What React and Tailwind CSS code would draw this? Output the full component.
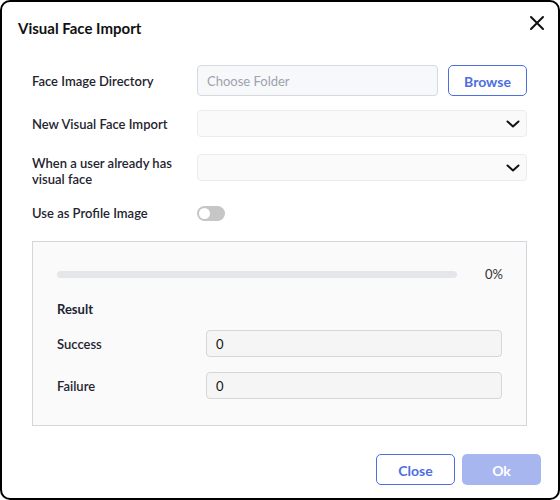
import React, { useState } from "react";

const Chevron = () => (
  <svg width="14" height="8" viewBox="0 0 14 8" fill="none">
    <path d="M1.5 1.5 L7 6.5 L12.5 1.5" stroke="#111" strokeWidth="2" strokeLinecap="round" strokeLinejoin="round" />
  </svg>
);

const SelectBox = ({ className = "" }) => (
  <div className={"flex-1 h-[27px] bg-[#fafafa] border border-[#ececec] rounded-[4px] flex items-center justify-end pr-[6px] " + className}>
    <Chevron />
  </div>
);

const App = () => {
  const [profile, setProfile] = useState(false);

  return (
    <div
      className="w-[560px] h-[500px] bg-white border-2 border-black rounded-[10px] flex flex-col text-[#1f2430]"
      style={{ fontFamily: "Lato, 'Noto Sans', sans-serif" }}
    >
      {/* header */}
      <div className="flex items-start justify-between pl-[16px] pr-[13px] pt-[16px]">
        <span className="text-[15px] leading-[20px] font-bold text-[#111]">Visual Face Import</span>
        <button type="button" className="w-[16px] h-[16px] mt-[-3px]">
          <svg width="16" height="16" viewBox="0 0 16 16" fill="none">
            <path d="M2 2 L14 14 M14 2 L2 14" stroke="#111" strokeWidth="2" strokeLinecap="round" />
          </svg>
        </button>
      </div>

      {/* form */}
      <div className="pl-[30px] pr-[31px] text-[13px] font-semibold">
        <div className="flex items-center h-[31px] mt-[27px]">
          <span className="w-[165px] pt-[2px]">Face Image Directory</span>
          <div className="flex-1 h-[31px] pt-[2px] bg-[#f7f8fa] border border-[#d5d9e0] rounded-[4px] flex items-center px-[9px] text-[#9ca3af] font-normal">
            Choose Folder
          </div>
          <button
            type="button"
            className="ml-[10px] w-[79px] h-[31px] pt-[1px] border border-[#4d6ee3] rounded-[5px] text-[#4d6ee3] text-[14px] font-bold"
          >
            Browse
          </button>
        </div>

        <div className="flex items-center h-[27px] mt-[14px]">
          <span className="w-[165px] pt-[2px]">New Visual Face Import</span>
          <SelectBox />
        </div>

        <div className="flex items-start h-[32px] mt-[17px]">
          <span className="w-[165px] leading-[16px] pt-[1px]">
            When a user already has
            <br />
            visual face
          </span>
          <SelectBox />
        </div>

        <div className="flex items-center h-[16px] mt-[19px]">
          <span className="w-[165px] pt-[2px]">Use as Profile Image</span>
          <button
            type="button"
            onClick={() => setProfile((v) => !v)}
            className={
              "w-[28px] h-[15px] rounded-full flex items-center px-[2px] " +
              (profile ? "bg-[#4d6ee3] justify-end" : "bg-[#c6c6c6] justify-start")
            }
          >
            <span className="w-[11px] h-[11px] rounded-full bg-white" />
          </button>
        </div>

        {/* progress panel */}
        <div className="mt-[20px] border border-[#d4d6dc] bg-[#fafafa] pt-[24px] pb-[26px] pl-[24px] pr-[23px]">
          <div className="flex items-center h-[16px]">
            <div className="flex-1 h-[7px] rounded-full bg-[#e5e6ea]" />
            <span className="w-[46px] text-right font-normal text-[#333] pt-[2px]">0%</span>
          </div>
          <div className="mt-[18px] h-[16px] leading-[16px] font-bold text-[#1e2433] pt-[1px]">Result</div>
          <div className="flex items-center h-[27px] mt-[14px]">
            <span className="w-[149px] pt-[2px]">Success</span>
            <div className="flex-1 mr-[1px] h-[27px] pt-[2px] bg-[#f5f5f5] border border-[#d4d6dc] rounded-[4px] flex items-center px-[9px] font-normal text-[#111]">
              0
            </div>
          </div>
          <div className="flex items-center h-[27px] mt-[15px]">
            <span className="w-[149px] pt-[2px]">Failure</span>
            <div className="flex-1 mr-[1px] h-[27px] pt-[2px] bg-[#f5f5f5] border border-[#d4d6dc] rounded-[4px] flex items-center px-[9px] font-normal text-[#111]">
              0
            </div>
          </div>
        </div>
      </div>

      {/* footer */}
      <div className="flex justify-end gap-[7px] pr-[17px] mt-[28px]">
        <button
          type="button"
          className="w-[79px] h-[31px] pt-[1px] border border-[#4d6ee3] rounded-[5px] text-[#4d6ee3] text-[14px] font-bold"
        >
          Close
        </button>
        <button
          type="button"
          className="w-[79px] h-[31px] pt-[1px] rounded-[5px] bg-[#a7b6ef] text-white text-[14px] font-bold"
        >
          Ok
        </button>
      </div>
    </div>
  );
};

export default App;
